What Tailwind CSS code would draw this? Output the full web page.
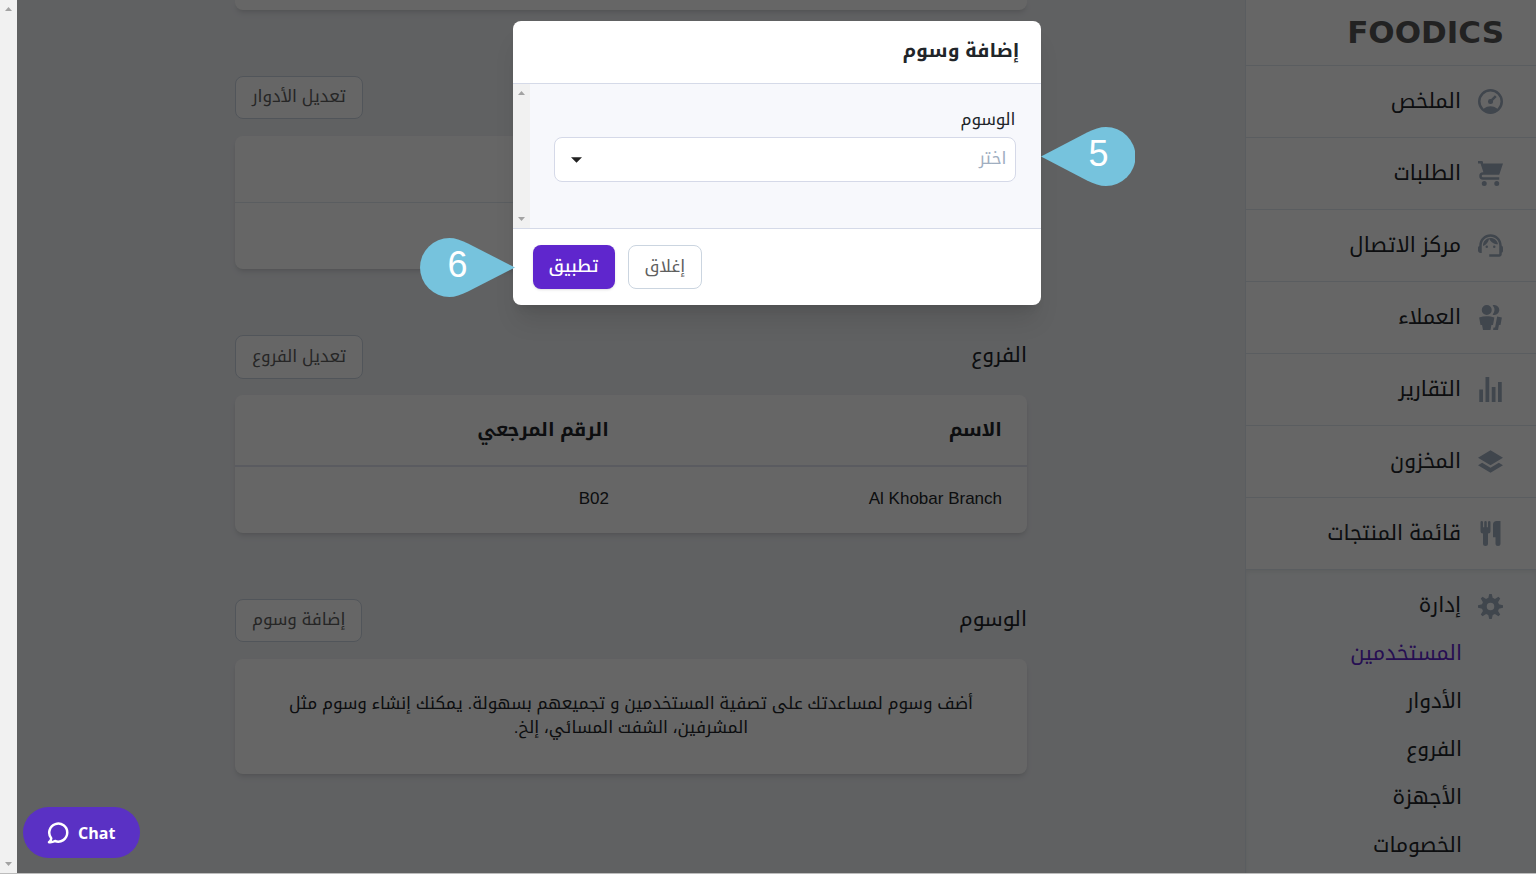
<!DOCTYPE html>
<html lang="ar" dir="rtl">
<head>
<meta charset="utf-8">
<title>Foodics</title>
<script src="https://cdn.jsdelivr.net/npm/@tailwindcss/browser@4"></script>
</head>
<body class="font-['Liberation_Sans','Noto_Kufi_Arabic','Noto_Sans_Arabic','DejaVu_Sans',sans-serif] text-[17px] leading-6 text-[#212529]">
<div class="flex h-screen overflow-hidden bg-white pb-px">

  <div class="relative flex min-w-0 flex-1 overflow-hidden border-b border-[#bdbdbd]">
    <!-- Sidebar -->
    <aside class="w-[291px] shrink-0 overflow-hidden border-l border-[#e2e8f0] bg-white">
      <div class="flex h-[66px] items-center border-b border-[#e2e8f0] pr-8 pb-0.5">
        <a href="#" dir="ltr" class="font-['DejaVu_Sans',sans-serif] text-[31px] leading-8 font-bold text-[#555555]">FOODICS</a>
      </div>
      <nav class="text-[21px] leading-7">
        <a href="#" class="flex h-[72px] items-center gap-[17px] border-b border-[#e2e8f0] pr-[33px]">
          <svg class="size-[25px] fill-[#a0aec0]" viewBox="0 0 20 20"><path d="M10 20a10 10 0 1 1 0-20 10 10 0 0 1 0 20zm-5.6-4.29a9.95 9.95 0 0 1 11.2 0 8 8 0 1 0-11.2 0zm6.12-7.64l3.02-3.02 1.41 1.41-3.02 3.02a2 2 0 1 1-1.41-1.41z"/></svg>
          <span class="pb-0.5">الملخص</span>
        </a>
        <a href="#" class="flex h-[72px] items-center gap-[17px] border-b border-[#e2e8f0] pr-[33px]">
          <svg class="size-[25px] fill-[#a0aec0]" viewBox="0 0 20 20"><path d="M4 2h16l-3 9H4a1 1 0 1 0 0 2h13v2H4a3 3 0 0 1 0-6h.33L3 5 2 2H0V0h3a1 1 0 0 1 1 1v1zm1 18a2 2 0 1 1 0-4 2 2 0 0 1 0 4zm10 0a2 2 0 1 1 0-4 2 2 0 0 1 0 4z"/></svg>
          <span class="pb-0.5">الطلبات</span>
        </a>
        <a href="#" class="flex h-[72px] items-center gap-[17px] border-b border-[#e2e8f0] pr-[33px]">
          <svg class="size-[25px] fill-[#a0aec0]" viewBox="2 2 20 20"><path d="M21 12.22C21 6.73 16.74 3 12 3c-4.69 0-9 3.65-9 9.28-.6.34-1 .98-1 1.72v2c0 1.1.9 2 2 2h1v-6.1c0-3.87 3.13-7 7-7s7 3.13 7 7V19h-8v2h8c1.1 0 2-.9 2-2v-1.22c.59-.31 1-.92 1-1.64v-2.3c0-.7-.41-1.31-1-1.62z"/><circle cx="9" cy="13" r="1"/><circle cx="15" cy="13" r="1"/><path d="M18 11.03C17.52 8.18 15.04 6 12.05 6c-3.03 0-6.29 2.51-6.03 6.45 2.47-1.01 4.33-3.21 4.86-5.89 1.31 2.63 4 4.44 7.12 4.47z"/></svg>
          <span class="pb-0.5">مركز الاتصال</span>
        </a>
        <a href="#" class="flex h-[72px] items-center gap-[17px] border-b border-[#e2e8f0] pr-[33px]">
          <svg class="size-[25px] fill-[#a0aec0]" viewBox="0 0 20 20"><path d="M7 8a4 4 0 1 1 0-8 4 4 0 0 1 0 8zm0 1c2.15 0 4.2.4 6.1 1.09L12 16h-1.25L10 20H4l-.75-4H2L.9 10.09A17.93 17.93 0 0 1 7 9zm8.31.17c1.32.18 2.59.48 3.8.92L18 16h-1.25L16 20h-3.96l.37-2h1.25l1.65-8.83zM13 0a4 4 0 1 1-1.33 7.76 5.96 5.96 0 0 0 0-7.52C12.1.1 12.53 0 13 0z"/></svg>
          <span class="pb-0.5">العملاء</span>
        </a>
        <a href="#" class="flex h-[72px] items-center gap-[17px] border-b border-[#e2e8f0] pr-[33px]">
          <svg class="size-[25px] fill-[#a0aec0]" viewBox="0 0 20 20"><path d="M1 10h3v10H1V10zM6 0h3v20H6V0zm5 8h3v12h-3V8zm5-4h3v16h-3V4z"/></svg>
          <span class="pb-0.5">التقارير</span>
        </a>
        <a href="#" class="flex h-[72px] items-center gap-[17px] border-b border-[#e2e8f0] pr-[33px]">
          <svg class="size-[25px] fill-[#a0aec0]" viewBox="0 0 20 20"><path d="M10 1l10 6-10 6L0 7l10-6zm6.67 10L20 13l-10 6-10-6 3.33-2L10 15l6.67-4z"/></svg>
          <span class="pb-0.5">المخزون</span>
        </a>
        <a href="#" class="flex h-[72px] items-center gap-[17px] border-b border-[#e2e8f0] pr-[33px]">
          <svg class="size-[25px] fill-[#a0aec0]" viewBox="0 0 20 20"><path d="M18 11v7a2 2 0 0 1-4 0v-5h-2V3a3 3 0 0 1 3-3h3v11zM4 10a2 2 0 0 1-2-2V1a1 1 0 0 1 2 0v4h1V1a1 1 0 0 1 2 0v4h1V1a1 1 0 0 1 2 0v7a2 2 0 0 1-2 2v8a2 2 0 0 1-4 0v-8z"/></svg>
          <span class="pb-0.5">قائمة المنتجات</span>
        </a>
        <div class="bg-[#f7fafc] pb-6 shadow-[inset_0_2px_4px_rgba(0,0,0,0.06)]">
          <a href="#" class="flex h-[72px] items-center gap-[17px] pr-[33px]">
            <svg class="size-[25px] fill-[#a0aec0]" viewBox="0 0 20 20"><path d="M3.94 6.5L2.22 3.64l1.42-1.42L6.5 3.94c.52-.3 1.1-.54 1.7-.7L9 0h2l.8 3.24c.61.16 1.18.4 1.7.7l2.86-1.72 1.42 1.42-1.72 2.86c.3.52.54 1.1.7 1.7L20 9v2l-3.24.8c-.16.61-.4 1.18-.7 1.7l1.72 2.86-1.42 1.42-2.86-1.72c-.52.3-1.1.54-1.7.7L11 20H9l-.8-3.24c-.61-.16-1.18-.4-1.7-.7l-2.86 1.72-1.42-1.42 1.72-2.86c-.3-.52-.54-1.1-.7-1.7L0 11V9l3.24-.8c.16-.61.4-1.18.7-1.7zM10 13a3 3 0 1 0 0-6 3 3 0 0 0 0 6z"/></svg>
            <span class="pb-0.5">إدارة</span>
          </a>
          <ul class="-mt-3 pr-[74px]">
            <li><a href="#" class="flex h-12 items-center pb-0.5 text-[#5f26cd]">المستخدمين</a></li>
            <li><a href="#" class="flex h-12 items-center pb-0.5">الأدوار</a></li>
            <li><a href="#" class="flex h-12 items-center pb-0.5">الفروع</a></li>
            <li><a href="#" class="flex h-12 items-center pb-0.5">الأجهزة</a></li>
            <li><a href="#" class="flex h-12 items-center pb-0.5">الخصومات</a></li>
          </ul>
        </div>
      </nav>
    </aside>

    <!-- Page content -->
    <main class="min-w-0 flex-1 overflow-hidden bg-[#f0f2f6]">
      <div class="mx-auto flex max-w-[792px] flex-col gap-[66px]">
        <div class="h-[10px] rounded-b-lg bg-white shadow-md"></div>

        <section>
          <div class="mb-4 flex h-11 items-start justify-end">
            <button class="h-[43px] rounded-lg border border-[#cbd5e0] bg-white px-4 pb-0.5 text-[#606060]">تعديل الأدوار</button>
          </div>
          <div class="rounded-lg bg-white shadow-md">
            <div class="h-[67px] border-b border-[#e2e8f0]"></div>
            <div class="h-[66px]"></div>
          </div>
        </section>

        <section>
          <div class="mb-4 flex h-11 items-start justify-between">
            <h2 class="pt-1.5 text-[21px] leading-7">الفروع</h2>
            <button class="h-11 rounded-lg border border-[#cbd5e0] bg-white px-4 text-[#606060]">تعديل الفروع</button>
          </div>
          <div class="rounded-lg bg-white shadow-md">
            <table class="w-full table-fixed text-right">
              <thead>
                <tr class="h-[71px] border-b-2 border-[#e2e4f0] text-[19px]">
                  <th class="w-1/2 pr-[25px] font-bold">الاسم</th>
                  <th class="pr-[22px] font-bold">الرقم المرجعي</th>
                </tr>
              </thead>
              <tbody>
                <tr class="h-[67px]">
                  <td class="pr-[25px] pb-0.5">Al Khobar Branch</td>
                  <td class="pr-[22px] pb-0.5">B02</td>
                </tr>
              </tbody>
            </table>
          </div>
        </section>

        <section>
          <div class="mb-4 flex h-11 items-start justify-between">
            <h2 class="pt-1.5 text-[21px] leading-7">الوسوم</h2>
            <button class="h-[43px] rounded-lg border border-[#cbd5e0] bg-white px-4 pb-0.5 text-[#606060]">إضافة وسوم</button>
          </div>
          <div class="rounded-lg bg-white px-12 pt-[33px] pb-[34px] text-center shadow-md">
            <p>أضف وسوم لمساعدتك على تصفية المستخدمين و تجميعهم بسهولة. يمكنك إنشاء وسوم مثل<br>المشرفين، الشفت المسائي، إلخ.</p>
          </div>
        </section>
      </div>
    </main>

    <!-- Backdrop and dialog -->
    <div class="absolute inset-0 flex items-start justify-center bg-black/60 pt-[21px]">
      <div role="dialog" aria-labelledby="dialog-title" class="relative w-[528px] rounded-lg bg-white shadow-xl">
        <header class="flex h-[62px] items-center px-[21px] pb-0.5">
          <h1 id="dialog-title" class="text-[19px] font-bold">إضافة وسوم</h1>
        </header>
        <div class="flex border-y border-[#d5dae8] bg-[#f7f8fc]">
          <div class="flex-1 pt-6 pr-[25px] pb-[46px] pl-6">
            <label for="tags" class="mb-[5px] block">الوسوم</label>
            <div class="relative">
              <select id="tags" class="h-[45px] w-full appearance-none rounded-lg border border-[#d5d9e8] bg-white px-2 pb-0.5 text-[#a0aec0]">
                <option>اختر</option>
              </select>
              <svg class="pointer-events-none absolute top-5 left-[17px] h-[6px] w-[11px] fill-[#212121]" viewBox="0 0 10 5"><path d="M0 0h10L5 5z"/></svg>
            </div>
          </div>
          <div class="flex w-[17px] flex-col items-center justify-between bg-[#f1f1f1] py-[7px]">
            <svg class="h-1 w-[7px] fill-[#a3a3a3]" viewBox="0 0 7 4"><path d="M0 4h7L3.500 0z"/></svg>
            <svg class="h-1 w-[7px] fill-[#a3a3a3]" viewBox="0 0 7 4"><path d="M0 0h7L3.500 4z"/></svg>
          </div>
        </div>
        <footer class="flex items-center justify-end gap-[13px] px-5 py-4">
          <button class="h-11 rounded-lg border border-[#cbd5e0] bg-white px-4 text-[#606060]">إغلاق</button>
          <button class="h-11 rounded-lg bg-[#5f26cd] px-4 font-medium text-white shadow-sm">تطبيق</button>
        </footer>

        <!-- Step markers -->
        <div class="absolute top-[106px] left-full h-[59px] w-[94px]">
          <svg class="size-full fill-[#76c3dd]" viewBox="0 0 94 59"><path d="M0 29.500 46 5.500C53 2 59 0 65 0a29.500 29.500 0 0 1 0 59c-6 0-12-2-19-5.500z"/></svg>
          <span class="absolute top-[9px] left-12 text-4xl leading-9 text-white">5</span>
        </div>
        <div class="absolute top-[217px] right-full -mr-0.5 h-[59px] w-[95px]">
          <svg class="size-full fill-[#76c3dd]" viewBox="0 0 95 59"><path d="M95 29.500 48 5.500C41 2 35 0 29.500 0a29.500 29.500 0 0 0 0 59c5.500 0 11.500-2 18.500-5.500z"/></svg>
          <span class="absolute top-[9px] left-7 text-4xl leading-9 text-white">6</span>
        </div>
      </div>
    </div>

    <!-- Chat launcher -->
    <button dir="ltr" class="absolute bottom-[15px] left-1.5 flex h-[51px] w-[117px] items-center gap-[9px] rounded-full bg-[#5a31c4] pl-6 font-['Open_Sans',sans-serif] text-base font-bold text-white">
      <svg class="size-[22px] fill-none stroke-white stroke-[2.500]" viewBox="0 0 22 22" stroke-linejoin="round" stroke-linecap="round"><path d="M4.200 16.200A9 9 0 1 1 8 19c-1.800 1-4 1.500-6 1.200C3.500 19 4.300 17.800 4.200 16.200z"/></svg>
      <span>Chat</span>
    </button>
  </div>

  <!-- Page scrollbar -->
  <div class="flex w-[17px] shrink-0 flex-col items-center justify-between border-b border-[#bdbdbd] bg-[#f1f1f1] py-[7px]">
    <svg class="h-1 w-[7px] fill-[#a3a3a3]" viewBox="0 0 7 4"><path d="M0 4h7L3.500 0z"/></svg>
    <svg class="h-1 w-[7px] fill-[#a3a3a3]" viewBox="0 0 7 4"><path d="M0 0h7L3.500 4z"/></svg>
  </div>
</div>
</body>
</html>
